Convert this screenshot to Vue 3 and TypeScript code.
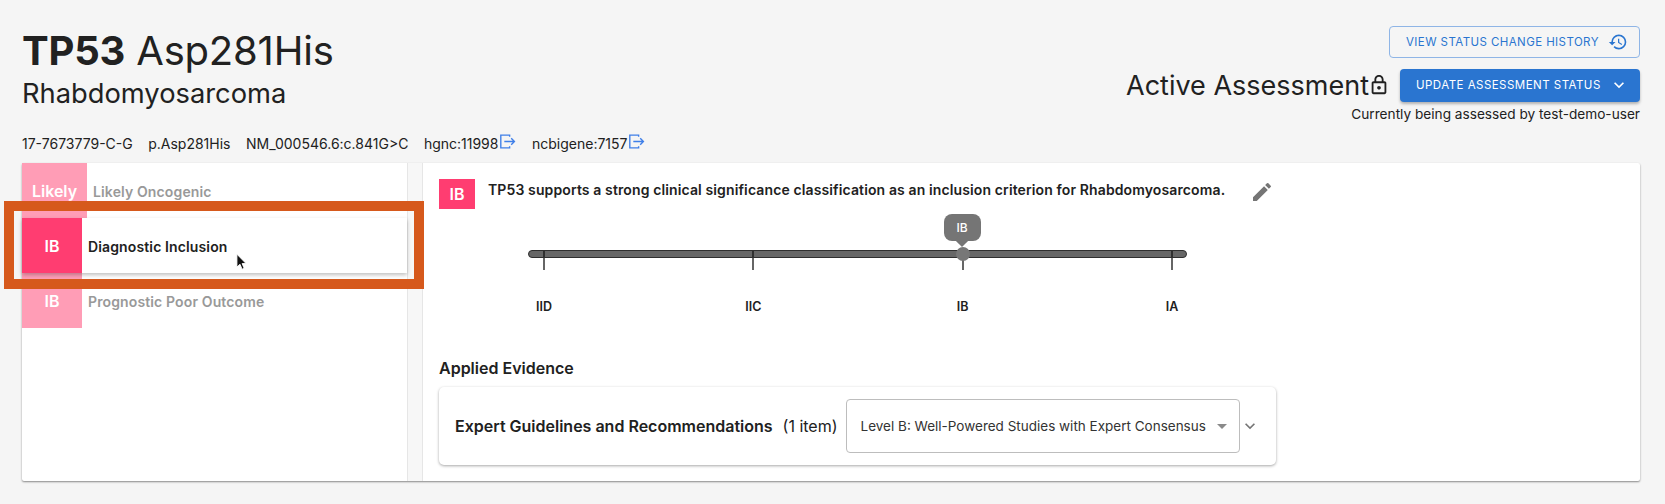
<script setup lang="ts">
const ticks = ['IID', 'IIC', 'IB', 'IA']
const meta = [
  { text: '17-7673779-C-G', link: false },
  { text: 'p.Asp281His', link: false },
  { text: 'NM_000546.6:c.841G>C', link: false },
  { text: 'hgnc:11998', link: true },
  { text: 'ncbigene:7157', link: true },
]
</script>

<template>
  <div class="page">
    <header class="head">
      <div class="head-left">
        <h1 class="title"><b>TP53</b> Asp281His</h1>
        <h2 class="subtitle">Rhabdomyosarcoma</h2>
      </div>
      <div class="head-right">
        <button class="btn-outline">
          VIEW STATUS CHANGE HISTORY
          <svg class="hist" viewBox="0 0 24 24" width="20" height="20"><path fill="currentColor" d="M13 3a9 9 0 0 0-9 9H1l3.89 3.89.07.14L9 12H6c0-3.87 3.13-7 7-7s7 3.13 7 7-3.13 7-7 7c-1.93 0-3.68-.79-4.94-2.06l-1.42 1.42A8.954 8.954 0 0 0 13 21a9 9 0 0 0 0-18zm-1 5v5l4.28 2.54.72-1.21-3.5-2.08V8H12z"/></svg>
        </button>
        <div class="status-row">
          <span class="status">Active Assessment</span>
          <svg class="lock" viewBox="0 0 24 24" width="22" height="22"><path fill="#212121" d="M18 8h-1V6c0-2.76-2.24-5-5-5S7 3.24 7 6v2H6c-1.1 0-2 .9-2 2v10c0 1.1.9 2 2 2h12c1.1 0 2-.9 2-2V10c0-1.1-.9-2-2-2zM9 6c0-1.66 1.34-3 3-3s3 1.34 3 3v2H9V6zm9 14H6V10h12v10zm-6-3c1.1 0 2-.9 2-2s-.9-2-2-2-2 .9-2 2 .9 2 2 2z"/></svg>
          <button class="btn-solid">
            UPDATE ASSESSMENT STATUS
            <svg viewBox="0 0 24 24" width="20" height="20"><path fill="currentColor" d="M7.41 8.59 12 13.17l4.59-4.58L18 10l-6 6-6-6z"/></svg>
          </button>
        </div>
        <div class="caption">Currently being assessed by test-demo-user</div>
      </div>
    </header>

    <div class="meta">
      <span v-for="m in meta" :key="m.text" class="meta-item">
        {{ m.text }}
        <svg v-if="m.link" class="ext" viewBox="0 0 16 16" width="17" height="17"><path fill="none" stroke="#3f7fe8" stroke-width="1.3" d="M10 3.5V2H1.7v12H10v-1.5M5 8h9.5M11.5 5l3 3-3 3"/></svg>
      </span>
    </div>

    <main class="panel">
      <aside class="list">
        <div class="row faded">
          <div class="badge wide">Likely</div>
          <div class="label">Likely Oncogenic</div>
        </div>
        <div class="row active">
          <div class="badge">IB</div>
          <div class="label">Diagnostic Inclusion</div>
        </div>
        <div class="row faded">
          <div class="badge">IB</div>
          <div class="label">Prognostic Poor Outcome</div>
        </div>
      </aside>
      <div class="gutter"></div>
      <section class="detail">
        <div class="summary">
          <div class="chip">IB</div>
          <p class="sentence">TP53 supports a strong clinical significance classification as an inclusion criterion for Rhabdomyosarcoma.</p>
          <svg class="pencil" viewBox="0 0 24 24" width="24" height="24"><path fill="#757575" d="M3 17.25V21h3.75L17.81 9.94l-3.75-3.75L3 17.25zM20.71 7.04a.996.996 0 0 0 0-1.41l-2.34-2.34a.996.996 0 0 0-1.41 0l-1.83 1.83 3.75 3.75 1.83-1.83z"/></svg>
        </div>

        <div class="slider">
          <div class="track">
            <div v-for="t in ticks" :key="t" class="tick">
              <template v-if="t === 'IB'">
                <span class="thumb"></span>
                <span class="bubble">IB</span>
              </template>
            </div>
          </div>
          <div class="tick-labels">
            <span v-for="t in ticks" :key="t" class="tick-label"><span>{{ t }}</span></span>
          </div>
        </div>

        <h3 class="applied">Applied Evidence</h3>
        <div class="evidence">
          <span class="ev-title">Expert Guidelines and Recommendations</span>
          <span class="ev-count">(1 item)</span>
          <div class="select">
            <span>Level B: Well-Powered Studies with Expert Consensus</span>
            <i class="caret"></i>
          </div>
          <svg class="chev" viewBox="0 0 24 24" width="20" height="20"><path fill="#757575" d="M7.41 8.59 12 13.17l4.59-4.58L18 10l-6 6-6-6z"/></svg>
        </div>
      </section>
    </main>

    <div class="highlight"></div>
    <svg class="cursor" viewBox="0 0 12 19" width="11" height="18"><path fill="#111" stroke="#fff" stroke-width="1" d="M1 1v14l3.4-3 2.2 5.4 2.3-1-2.2-5.2H11z"/></svg>
  </div>
</template>

<style>
html, body { margin: 0; background: #f5f5f5; }
</style>

<style scoped>
.page {
  position: relative;
  width: 1665px;
  height: 504px;
  box-sizing: border-box;
  padding: 26px 25px 0 22px;
  background: #f5f5f5;
  color: #212121;
  font-family: Inter, "Noto Sans", sans-serif;
  overflow: hidden;
}
.head { display: flex; justify-content: space-between; height: 104px; }
.title { margin: 0; font-size: 40px; line-height: 50px; font-weight: 400; letter-spacing: -0.2px; }
.title b { font-weight: 700; }
.subtitle { margin: 0; font-size: 27.3px; line-height: 36px; font-weight: 400; }
.head-right { display: flex; flex-direction: column; align-items: flex-end; }
button { font-family: inherit; cursor: pointer; }
.btn-outline {
  display: flex; align-items: center; gap: 9px;
  width: 251px; height: 32px; padding: 0 10px 0 16px; box-sizing: border-box;
  background: transparent; border: 1px solid #8fb5e6; border-radius: 4px;
  color: #2a75d0; font-size: 11.5px; font-weight: 400; letter-spacing: .42px; white-space: nowrap;
}
.status-row { display: flex; align-items: center; margin-top: 10px; height: 34px; }
.status { font-size: 27px; font-weight: 400; line-height: 34px; position: relative; top: 1px; }
.lock { margin: 0 10px 0 -1px; }
.btn-solid {
  display: flex; align-items: center; justify-content: space-between;
  width: 240px; height: 33px; padding: 0 11px 0 16px; box-sizing: border-box;
  background: #2a75d0; border: 0; border-radius: 4px; color: #fff;
  font-size: 11.5px; font-weight: 400; letter-spacing: .47px; white-space: nowrap;
  box-shadow: 0 2px 3px rgba(0,0,0,.28);
}
.caption { margin-top: 3px; font-size: 13.65px; line-height: 18px; }
.meta { display: flex; gap: 15.5px; align-items: center; height: 20px; margin-top: 3px; font-size: 14px; }
.meta-item { display: inline-flex; align-items: center; gap: 0; white-space: nowrap; }
.ext { margin: -3px 0 0 1px; }
.panel {
  display: flex; margin-top: 10px; height: 318px; background: #fff;
  box-shadow: 0 1px 2px rgba(0,0,0,.45);
  border-radius: 2px;
}
.list { width: 385px; flex: none; }
.row { display: flex; align-items: center; height: 55px; position: relative; }
.badge {
  width: 60px; height: 55px; flex: none; padding-top: 1px; box-sizing: border-box;
  display: flex; align-items: center; justify-content: center;
  background: #ff3d71; color: #fff; font-size: 16px; font-weight: 600;
}
.badge.wide { width: 65px; }
.label { margin: 2px 0 0 6px; font-size: 14px; font-weight: 600; letter-spacing: .13px; white-space: nowrap; }
.faded .badge { background: #ff9db6; }
.faded .label { color: #999; }
.active { box-shadow: 0 2px 4px rgba(0,0,0,.25); background: #fff; z-index: 1; }
.gutter { width: 14px; flex: none; background: #f7f7f7; border: solid #e6e6e6; border-width: 0 1px; }
.detail { flex: 1; padding: 16px 16px 0 16px; min-width: 0; }
.summary { display: flex; align-items: flex-start; height: 30px; }
.chip {
  width: 36px; height: 30px; flex: none; display: flex; align-items: center; justify-content: center;
  background: #ff3d71; color: #fff; font-size: 16px; font-weight: 600;
}
.sentence { margin: 0 0 0 13px; font-size: 14px; letter-spacing: .12px; line-height: 22px; font-weight: 600; white-space: nowrap; }
.pencil { margin: 1px 0 0 25px; }
.slider { width: 659px; margin: 41px 0 0 89px; }
.track {
  display: flex; justify-content: space-between; box-sizing: border-box;
  height: 8px; padding: 0 13px 0 14px; background: #666; border: 1px solid #2e2e2e; border-radius: 4px;
}
.tick { position: relative; width: 2px; height: 20px; margin-top: -1px; background: linear-gradient(#2e2e2e 8px, #666 8px); }
.thumb { position: absolute; left: -6px; top: -3px; width: 14px; height: 14px; border-radius: 50%; background: #777; }
.bubble {
  position: absolute; left: -18px; top: -36px; width: 37px; height: 27px; border-radius: 8px;
  background: #757575; color: #fff; font-size: 12px; font-weight: 500;
  display: flex; align-items: center; justify-content: center;
}
.bubble::after {
  content: ''; position: absolute; left: 50%; bottom: -4px; width: 10px; height: 10px;
  margin-left: -5px; background: #757575; transform: rotate(45deg);
}
.tick-labels { display: flex; justify-content: space-between; padding: 0 15px 0 16px; margin-top: 41px; }
.tick-label { width: 0; display: flex; justify-content: center; font-size: 12.5px; line-height: 16px; font-weight: 600; }
.applied { margin: 43px 0 0; font-size: 16px; line-height: 20px; font-weight: 600; }
.evidence {
  display: flex; align-items: center; margin-top: 9px; width: 837px; height: 78px; box-sizing: border-box;
  padding: 0 16px 0 16px; background: #fff; border-radius: 5px;
  box-shadow: 0 1px 3px rgba(0,0,0,.35);
}
.ev-title { font-size: 16px; font-weight: 600; white-space: nowrap; }
.ev-count { margin-left: 10px; font-size: 16px; white-space: nowrap; }
.select {
  display: flex; align-items: center; justify-content: space-between; box-sizing: border-box;
  margin-left: 8px; width: 394px; height: 54px; padding: 0 12px 0 14px; flex: none;
  border: 1px solid #bdbdbd; border-radius: 4px; font-size: 13.5px; color: #333; white-space: nowrap;
}
.caret { width: 0; height: 0; border: 5px solid transparent; border-top-color: #8a8a8a; border-bottom: 0; }
.chev { margin-left: 0; }
.highlight {
  position: absolute; left: 4px; top: 201px; width: 420px; height: 88px; box-sizing: border-box;
  border: 10px solid #d6591c; z-index: 2; pointer-events: none;
}
.cursor { position: absolute; left: 236px; top: 253px; z-index: 3; }
</style>
